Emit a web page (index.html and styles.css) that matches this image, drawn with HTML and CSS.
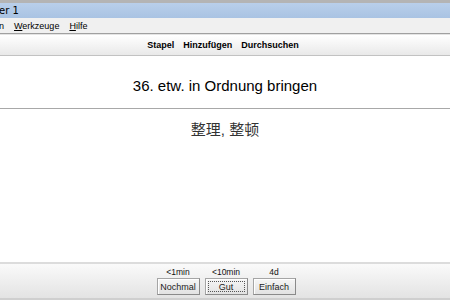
FILE: index.html
```html
<!DOCTYPE html>
<html lang="de">
<head>
  <meta charset="UTF-8" />
  <title>Anki - Benutzer 1</title>
  <link rel="stylesheet" href="styles.css">
</head>
<body>
  <div class="fenster">
    <div class="titelleiste"><span class="titel">er 1</span></div>

    <div class="menue">
      <span class="rest">n</span>
      <span><u>W</u>erkzeuge</span>
      <span><u>H</u>ilfe</span>
    </div>

    <div class="werkzeuge">
      <a href="#">Stapel</a>
      <a href="#">Hinzufügen</a>
      <a href="#">Durchsuchen</a>
    </div>

    <div class="karte">
      <div class="frage">36. etw. in Ordnung bringen</div>
      <hr class="trenner" />
      <div class="antwort">整理, 整顿</div>
    </div>

    <div class="antwortleiste">
      <div class="knopf-spalte">
        <span class="zeit">&lt;1min</span>
        <button>Nochmal</button>
      </div>
      <div class="knopf-spalte">
        <span class="zeit">&lt;10min</span>
        <button class="standard">Gut</button>
      </div>
      <div class="knopf-spalte">
        <span class="zeit">4d</span>
        <button>Einfach</button>
      </div>
    </div>
  </div>
</body>
</html>
```

FILE: styles.css
```css
body {
  margin: 0;
  background-color: #fff;
  font-family: "Liberation Sans", Tahoma, sans-serif;
  color: #000;
}
.fenster {
  width: 450px;
  height: 300px;
  display: flex;
  flex-direction: column;
  overflow: hidden;
}
.titelleiste {
  height: 15px;
  border-top: 3px solid #b4b4b4;
  background: linear-gradient(#b9cfea, #a9c3e3);
  font-family: "DejaVu Sans", sans-serif;
  font-size: 10px;
  line-height: 15px;
}
.titel {
  margin-left: -1px;
}
.menue {
  height: 13px;
  background-color: #f0f0f0;
  border-bottom: 1px solid #a0a0a0;
  font-size: 9px;
  line-height: 14px;
  display: flex;
  gap: 10px;
  padding-top: 1px;
  padding-bottom: 1px;
}
.menue .rest {
  margin-left: -1px;
}
.werkzeuge {
  height: 20px;
  background: linear-gradient(#ffffff, #e9e9e9);
  border-top: 1px solid #e4e4e4;
  border-bottom: 1px solid #c2c2c2;
  display: flex;
  justify-content: center;
  gap: 9px;
  padding-right: 4px;
}
.werkzeuge a {
  color: #000;
  text-decoration: none;
  font-weight: bold;
  font-size: 9px;
  line-height: 20px;
}
.karte {
  flex: 1;
  background-color: #fff;
  text-align: center;
  padding-top: 20px;
}
.frage {
  font-size: 15px;
  line-height: 20px;
}
.trenner {
  border: none;
  border-top: 1px solid #a8a8a8;
  margin: 12px 0 11px;
}
.antwort {
  font-family: "Liberation Sans", "Noto Sans CJK SC", sans-serif;
  font-size: 15px;
  line-height: 20px;
  color: #333;
}
.antwortleiste {
  height: 34px;
  border-top: 2px solid #dcdcdc;
  border-bottom: 2px solid #cfcfcf;
  background: linear-gradient(#fafafa, #e3e3e3);
  display: flex;
  justify-content: center;
  gap: 5px;
  padding-left: 2px;
}
.knopf-spalte {
  display: flex;
  flex-direction: column;
  align-items: center;
  padding-top: 3px;
}
.zeit {
  font-size: 8.5px;
  line-height: 11px;
  color: #111;
}
button {
  font-family: "Liberation Sans", Tahoma, sans-serif;
  font-size: 9px;
  height: 17px;
  width: 43px;
  padding: 0;
  background: linear-gradient(#f6f6f6, #e2e2e2);
  border: 1px solid #a5a5a5;
  border-right-color: #8a8a8a;
  border-bottom-color: #8a8a8a;
  box-shadow: inset 1px 1px 0 #fff;
  color: #222;
}
button.standard {
  outline: 1px dotted #555;
  outline-offset: -4px;
}
```
